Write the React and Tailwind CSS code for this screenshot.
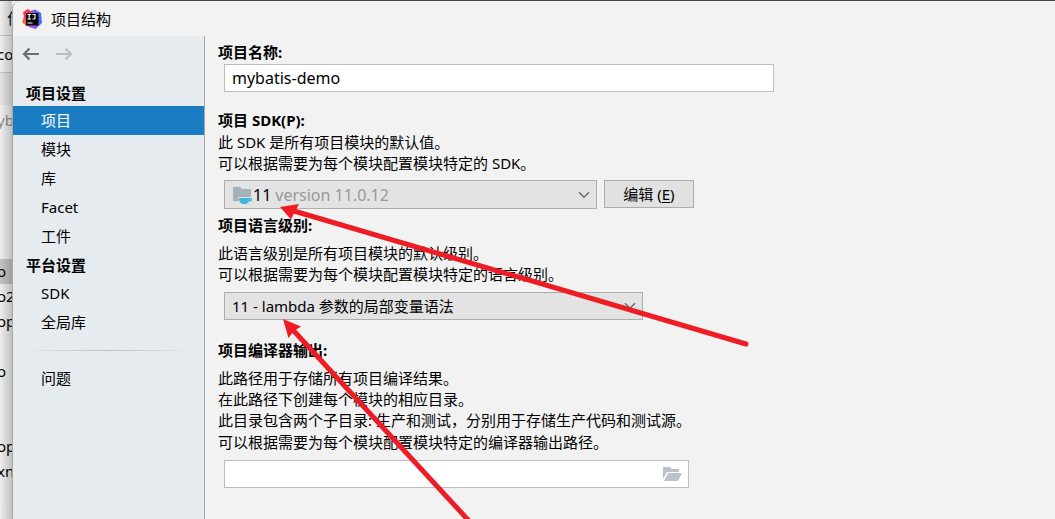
import React from "react";

const backdropRows = [
  { text: "", box: "h-[35px] border-b border-[#c6c6c6]" },
  { text: "con", box: "h-[37px] border-b border-[#c6c6c6]" },
  { text: "", box: "h-8 bg-[#e4e4e4]" },
  { text: "yb", box: "h-[30px] text-[#8f8f8f]" },
  { text: "", box: "h-[124px]" },
  { text: "o", box: "h-[25px] bg-[#c4c4c4]" },
  { text: "o2", box: "h-[25px]" },
  { text: "op", box: "h-[25px]" },
  { text: "", box: "h-[25px]" },
  { text: "o", box: "h-[25px]" },
  { text: "", box: "h-[50px]" },
  { text: "op", box: "h-[25px]" },
  { text: "xn", box: "h-[25px]" },
];

function Backdrop() {
  return (
    <div className="relative flex w-3 shrink-0 flex-col overflow-hidden bg-[#efefef]">
      {backdropRows.map((r, i) => (
        <div key={i} className={"flex shrink-0 items-center whitespace-nowrap " + r.box}>
          {i === 0 ? <span className="ml-[7px]">作</span> : <span className="-ml-[3px]">{r.text}</span>}
        </div>
      ))}
      <div className="absolute inset-0 bg-linear-to-r from-black/0 to-black/20" />
    </div>
  );
}

function Logo() {
  return (
    <svg viewBox="0 0 20 20" className="size-5" aria-hidden="true">
      <defs>
        <linearGradient id="lg" x1="0" y1="0" x2="0" y2="1">
          <stop offset="0" stopColor="#fc2d6b" />
          <stop offset="0.5" stopColor="#fb3a55" />
          <stop offset="1" stopColor="#fe8a1b" />
        </linearGradient>
        <linearGradient id="lb" x1="0" y1="0" x2="1" y2="1">
          <stop offset="0" stopColor="#b04ae0" />
          <stop offset="0.5" stopColor="#3a78f0" />
          <stop offset="1" stopColor="#6b57ff" />
        </linearGradient>
      </defs>
      <path d="M8 2 13 .500 19 4 20 14 13.500 20 9 17 7 10Z" fill="url(#lb)" />
      <path d="M1 3 6 0 11 4 9 16 4 17 0 13 2 8Z" fill="url(#lg)" />
      <path d="M4 16h9l1 4-6-1.500z" fill="#b74af7" />
      <path d="M4 4h12.500v12.500H4z" fill="#080808" />
      <path d="M5.500 5.500h3.500M7.200 5.500v4.500M5.500 10h3.500M10.500 5.500h2.500v3.500q0 1-1 1h-1.500" stroke="#fff" strokeWidth="1.100" fill="none" />
      <path d="M5.500 14h5" stroke="#fff" strokeWidth="1" />
    </svg>
  );
}

function Chevron() {
  return (
    <svg viewBox="0 0 12 8" className="pointer-events-none mr-1.5 h-2 w-3 shrink-0" fill="none" stroke="#666" strokeWidth="1.400" aria-hidden="true">
      <path d="M1 1.200 6 6.200 11 1.200" />
    </svg>
  );
}

function NavArrow({ flip, color }) {
  return (
    <svg viewBox="0 0 18 14" className="h-3.5 w-[18px]" fill="none" stroke={color} strokeWidth="2.200" aria-hidden="true">
      {flip ? <path d="M0 7H15M9.500 1.500 15 7 9.500 12.500" /> : <path d="M17 7H2M7.500 1.500 2 7 7.500 12.500" />}
    </svg>
  );
}

function SideItem({ children, active }) {
  return (
    <a
      href="#"
      aria-current={active ? "page" : undefined}
      className={"flex h-[29px] items-center pl-7 " + (active ? "bg-[#1a7dc4] text-white" : "")}
    >
      {children}
    </a>
  );
}

function Sidebar() {
  return (
    <nav className="w-48 shrink-0 border-r border-[#a6a6a6] bg-[#e6ebef]">
      <div className="flex h-9 items-center gap-4 pl-[9px]">
        <button aria-label="后退"><NavArrow color="#6e6e6e" /></button>
        <button aria-label="前进" disabled><NavArrow flip color="#bcbec0" /></button>
      </div>
      <h2 className="flex h-[34px] items-end pb-0.5 pl-[13px] font-bold">项目设置</h2>
      <SideItem active>项目</SideItem>
      <SideItem>模块</SideItem>
      <SideItem>库</SideItem>
      <SideItem>Facet</SideItem>
      <SideItem>工件</SideItem>
      <h2 className="flex h-7 items-center pl-[13px] font-bold">平台设置</h2>
      <SideItem>SDK</SideItem>
      <SideItem>全局库</SideItem>
      <div className="mx-2 my-[13px] h-px bg-linear-to-r from-transparent via-[#bcbfc2] to-transparent" />
      <SideItem>问题</SideItem>
    </nav>
  );
}

function Arrows() {
  return (
    <svg className="pointer-events-none absolute top-0 left-0 h-[519px] w-[1055px]" viewBox="0 1 1055 519" aria-hidden="true">
      <g stroke="#ee1c25" strokeWidth="5" strokeLinecap="round" fill="#ee1c25">
        <path d="M294 211 746 344" />
        <path d="M293 330 470 522" />
      </g>
      <path d="M280 207 299 204 295 211.500 291 219.500Z" fill="#ee1c25" />
      <path d="M283 319 301 326.500 294 331 288.500 338Z" fill="#ee1c25" />
    </svg>
  );
}

export default function App() {
  return (
    <div className="relative flex min-h-screen overflow-hidden border-t border-[#4b4048] bg-[#efefef] font-['Noto_Sans','Noto_Sans_CJK_SC',sans-serif] text-[15px] leading-[21px] text-black">
      <Backdrop />
      <div className="flex min-w-0 flex-1 flex-col rounded-tl-lg border-l border-[#a8a8a8] bg-[#f2f2f2]">
        <header className="flex h-[35px] items-center gap-[9px] pt-px pl-[9px]">
          <Logo />
          <h1>项目结构</h1>
        </header>
        <div className="flex flex-1">
          <Sidebar />
          <main className="min-w-0 flex-1 pt-1.5 pl-[13px]">
            <label htmlFor="name" className="block font-bold">项目名称:</label>
            <input
              id="name"
              defaultValue="mybatis-demo"
              className="mt-px ml-1.5 block h-7 w-[550px] max-w-full border border-[#bdbdbd] bg-white px-[7px] text-base"
            />
            <h2 id="sdk" className="mt-[18px] font-bold">项目 SDK(P):</h2>
            <p className="mt-px">此 SDK 是所有项目模块的默认值。</p>
            <p>可以根据需要为每个模块配置模块特定的 SDK。</p>
            <div className="mt-1.5 ml-1.5 flex gap-[7px]">
              <div className="flex h-[29px] w-[373px] items-center border border-[#adadad] bg-[#e3e3e3] pl-2">
                <svg viewBox="0 0 20 18" className="h-[18px] w-5 shrink-0" aria-hidden="true">
                  <path d="M0 1h7l2 2h9v12H0z" fill="#a7b1b9" />
                  <path d="M5 11h15v5h-2l-2 2H7z" fill="#e3e3e3" />
                  <path d="M6 12h11v1q-1 4-4 5H9q-3-2-3-6z" fill="#40b6e0" />
                  <path d="M16 12.700h2.300v2H15" stroke="#40b6e0" strokeWidth="1.200" fill="none" />
                </svg>
                <span className="mr-1 text-base">11</span>
                <select aria-labelledby="sdk" className="min-w-0 flex-1 appearance-none text-base text-[#999]">
                  <option>version 11.0.12</option>
                </select>
                <Chevron />
              </div>
              <button className="h-7 w-[90px] border border-[#adadad] bg-[#e1e1e1]">
                编辑 (<u className="underline-offset-2">E</u>)
              </button>
            </div>
            <label htmlFor="level" className="mt-1.5 block font-bold">项目语言级别:</label>
            <p className="mt-[7px]">此语言级别是所有项目模块的默认级别。</p>
            <p>可以根据需要为每个模块配置模块特定的语言级别。</p>
            <div className="mt-[7px] ml-1.5 flex h-7 w-[419px] items-center border border-[#adadad] bg-[#e3e3e3] pl-[7px]">
              <select id="level" className="min-w-0 flex-1 appearance-none">
                <option>11 - lambda 参数的局部变量语法</option>
              </select>
              <Chevron />
            </div>
            <label htmlFor="output" className="mt-5 block font-bold">项目编译器输出:</label>
            <p className="mt-[7px]">此路径用于存储所有项目编译结果。</p>
            <p>在此路径下创建每个模块的相应目录。</p>
            <p>此目录包含两个子目录: 生产和测试，分别用于存储生产代码和测试源。</p>
            <p className="mt-px">可以根据需要为每个模块配置模块特定的编译器输出路径。</p>
            <div className="mt-[7px] ml-1.5 flex h-7 w-[465px] items-center border border-[#bdbdbd] bg-white">
              <input id="output" className="h-full min-w-0 flex-1 px-[7px]" />
              <button aria-label="浏览" className="mr-[5px]">
                <svg viewBox="0 0 20 14" className="h-3.5 w-5" fill="#bcc2c7" aria-hidden="true">
                  <path d="M0 0h7l2 2h7v3H4L0 12z" />
                  <path d="M5 6h14l-4 8H1z" />
                </svg>
              </button>
            </div>
          </main>
        </div>
      </div>
      <Arrows />
    </div>
  );
}
